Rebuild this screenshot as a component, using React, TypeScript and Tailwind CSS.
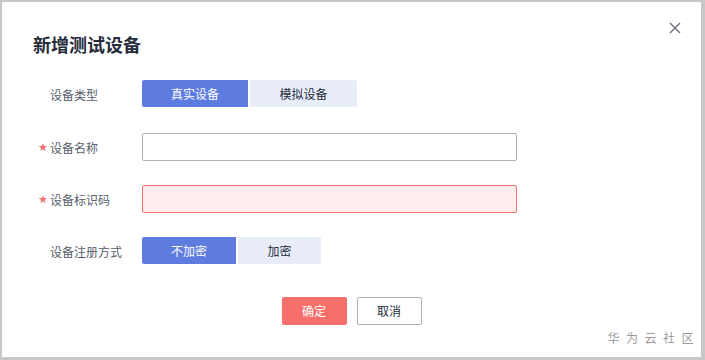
import React from "react";

const font = { fontFamily: '"Noto Sans CJK SC", "Noto Sans", sans-serif' };

function Label({ text, required }: { text: string; required?: boolean }) {
  return (
    <div className="w-[106px] shrink-0 flex items-center text-[12px] text-[#575d6c] pt-[2px]">
      <span className="w-[14px] pl-[2px] text-[#f0726d] text-[11px] leading-none" style={{ fontFamily: '"DejaVu Sans", sans-serif' }}>{required ? "★" : ""}</span>
      <span>{text}</span>
    </div>
  );
}

export default function App() {
  return (
    <div className="w-[705px] h-[360px] bg-[#c8c8c8] pt-[2px] pl-[2px] pr-[4px] pb-[3px]" style={font}>
      <div className="w-full h-full bg-white relative flex flex-col">
        <div className="flex items-center justify-between pl-[31px] pr-[20px] pt-[29px] h-[54px]">
          <span className="text-[18px] font-bold text-[#252b3a] leading-none">新增测试设备</span>
          <svg width="12" height="12" viewBox="0 0 12 12" className="-mt-[32px]">
            <path d="M1 1L11 11M11 1L1 11" stroke="#6b6f77" strokeWidth="1.4" />
          </svg>
        </div>
        <div className="flex flex-col pl-[34px] pt-[24px] gap-[25px]">
          <div className="flex items-center h-[27px]">
            <Label text="设备类型" />
            <div className="flex gap-[2px] text-[12px]">
              <div className="w-[106px] h-[27px] bg-[#5e7ce0] text-white flex items-center justify-center rounded-l-[2px]">真实设备</div>
              <div className="w-[107px] h-[27px] bg-[#e9edfa] text-[#252b3a] flex items-center justify-center rounded-r-[2px]">模拟设备</div>
            </div>
          </div>
          <div className="flex items-center h-[27px] mt-[1px]">
            <Label text="设备名称" required />
            <div className="w-[375px] h-[28px] border border-[#adb0b8] rounded-[2px] bg-white" />
          </div>
          <div className="flex items-center h-[27px]">
            <Label text="设备标识码" required />
            <div className="w-[375px] h-[28px] border border-[#f66f6a] rounded-[2px] bg-[#ffeeed]" />
          </div>
          <div className="flex items-center h-[27px]">
            <Label text="设备注册方式" />
            <div className="flex gap-[2px] text-[12px]">
              <div className="w-[94px] h-[27px] bg-[#5e7ce0] text-white flex items-center justify-center rounded-l-[2px]">不加密</div>
              <div className="w-[83px] h-[27px] bg-[#e9edfa] text-[#252b3a] flex items-center justify-center rounded-r-[2px]">加密</div>
            </div>
          </div>
        </div>
        <div className="flex justify-center gap-[10px] mt-[33px] text-[12px]">
          <div className="w-[65px] h-[28px] bg-[#f66f6a] text-white flex items-center justify-center rounded-[2px]">确定</div>
          <div className="w-[65px] h-[28px] border border-[#adb0b8] text-[#252b3a] bg-white flex items-center justify-center rounded-[2px]">取消</div>
        </div>
        <div className="absolute right-[1px] bottom-[10px] text-[12px] text-[#9a9a9a] tracking-[6.5px]">华为云社区</div>
      </div>
    </div>
  );
}
